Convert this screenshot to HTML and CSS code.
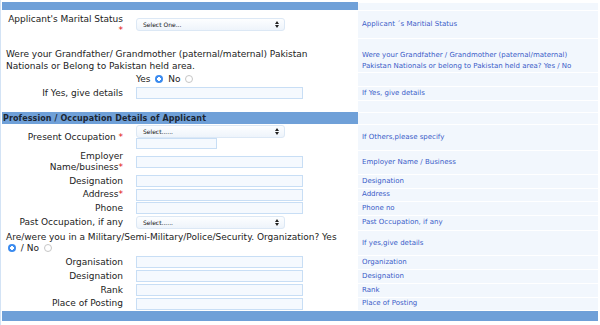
FILE: index.html
```html
<!DOCTYPE html>
<html lang="en">
<head>
    <meta charset="UTF-8">
    <meta name="viewport" content="width=device-width, initial-scale=1.0">
    <title>Applicant Details</title>
    <link rel="stylesheet" href="styles.css">
</head>
<body>
    <div class="page">
        <table class="form">
            <colgroup>
                <col class="col-label">
                <col class="col-field">
                <col class="col-help">
            </colgroup>
            <tr class="top">
                <td colspan="2" class="bar"></td>
                <td class="help"></td>
            </tr>
            <tr class="tall">
                <td class="label">Applicant's Marital Status<br><span class="req">*</span></td>
                <td class="field">
                    <div class="select wide"><span>Select One...</span><svg width="4" height="7" viewBox="0 0 4 7"><path d="M0 3L2 0L4 3Z M0 4L2 7L4 4Z" fill="#222"/></svg></div>
                </td>
                <td class="help">Applicant ´s Maritial Status</td>
            </tr>
            <tr class="question">
                <td colspan="2" class="text">Were your Grandfather/ Grandmother (paternal/maternal) Pakistan Nationals or Belong to Pakistan held area.</td>
                <td class="help">Were your Grandfather / Grandmother (paternal/maternal)<br>Pakistan Nationals or belong to Pakistan held area? Yes / No</td>
            </tr>
            <tr>
                <td></td>
                <td class="field">Yes <input type="radio" name="gp" checked> No <input type="radio" name="gp"></td>
                <td class="help"></td>
            </tr>
            <tr>
                <td class="label">If Yes, give details</td>
                <td class="field"><input type="text" class="box"></td>
                <td class="help">If Yes, give details</td>
            </tr>
            <tr class="spacer">
                <td colspan="2"></td>
                <td class="help"></td>
            </tr>
            <tr class="heading">
                <td colspan="2" class="bar section">Profession / Occupation Details of Applicant</td>
                <td class="help"></td>
            </tr>
            <tr class="occupation">
                <td class="label">Present Occupation <span class="req">*</span></td>
                <td class="field">
                    <div class="select wide"><span>Select......</span><svg width="4" height="7" viewBox="0 0 4 7"><path d="M0 3L2 0L4 3Z M0 4L2 7L4 4Z" fill="#222"/></svg></div>
                    <input type="text" class="box short">
                </td>
                <td class="help">If Others,please specify</td>
            </tr>
            <tr class="double">
                <td class="label">Employer<br>Name/business<span class="req">*</span></td>
                <td class="field"><input type="text" class="box"></td>
                <td class="help">Employer Name / Business</td>
            </tr>
            <tr>
                <td class="label">Designation</td>
                <td class="field"><input type="text" class="box"></td>
                <td class="help">Designation</td>
            </tr>
            <tr class="short-row">
                <td class="label">Address<span class="req">*</span></td>
                <td class="field"><input type="text" class="box"></td>
                <td class="help">Address</td>
            </tr>
            <tr>
                <td class="label">Phone</td>
                <td class="field"><input type="text" class="box"></td>
                <td class="help">Phone no</td>
            </tr>
            <tr class="past">
                <td class="label">Past Occupation, if any</td>
                <td class="field">
                    <div class="select wide"><span>Select......</span><svg width="4" height="7" viewBox="0 0 4 7"><path d="M0 3L2 0L4 3Z M0 4L2 7L4 4Z" fill="#222"/></svg></div>
                </td>
                <td class="help">Past Occupation, if any</td>
            </tr>
            <tr class="military">
                <td colspan="2" class="text">Are/were you in a Military/Semi-Military/Police/Security. Organization? Yes <input type="radio" name="mil" checked> / No <input type="radio" name="mil"></td>
                <td class="help">If yes,give details</td>
            </tr>
            <tr>
                <td class="label">Organisation</td>
                <td class="field"><input type="text" class="box"></td>
                <td class="help">Organization</td>
            </tr>
            <tr>
                <td class="label">Designation</td>
                <td class="field"><input type="text" class="box"></td>
                <td class="help">Designation</td>
            </tr>
            <tr>
                <td class="label">Rank</td>
                <td class="field"><input type="text" class="box"></td>
                <td class="help">Rank</td>
            </tr>
            <tr class="short-row">
                <td class="label">Place of Posting</td>
                <td class="field"><input type="text" class="box"></td>
                <td class="help">Place of Posting</td>
            </tr>
            <tr class="foot">
                <td colspan="3" class="bar"></td>
            </tr>
        </table>
    </div>
</body>
</html>
```
FILE: styles.css
```css
body {
    margin: 0;
    background: #fff;
    font-family: "DejaVu Sans", Verdana, sans-serif;
    color: #222;
}
.page {
    border-left: 1px solid #d3e3f5;
    padding: 2px 0 0 1px;
    height: 323px;
}
.form {
    width: 596px;
    border-collapse: collapse;
    table-layout: fixed;
    font-size: 9px;
    line-height: 11px;
}
.col-label {
    width: 128px;
}
.col-field {
    width: 228px;
}
.form td {
    height: 14px;
    padding: 0;
    vertical-align: middle;
}
.bar {
    background: #6fa0d8;
}
.top td {
    height: 8px;
}
.tall td {
    height: 27px;
}
.tall .label {
    padding-top: 1px;
}
.question td {
    height: 34px;
    padding-bottom: 0;
    vertical-align: bottom;
    line-height: 12px;
}
.question .help {
    line-height: 11px;
}
.spacer td {
    height: 12px;
}
.heading td {
    height: 12px;
}
.occupation td {
    height: 26px;
}
.double td {
    height: 24px;
}
.military td {
    height: 24px;
    padding-top: 1px;
}
.short-row td {
    height: 13px;
}
.past td {
    height: 15px;
}
.foot td {
    height: 11px;
    box-shadow: inset 0 1px #fff;
}
.section {
    font-weight: bold;
    font-size: 8px;
    letter-spacing: 0.1px;
    color: #1c2633;
    padding-left: 1px !important;
}
.label {
    text-align: right;
    padding-right: 7px !important;
}
.req {
    color: #e01010;
}
.field {
    padding-left: 6px !important;
}
.text {
    padding-left: 4px !important;
    padding-right: 14px !important;
}
.help {
    background: #f2f7fd;
    box-shadow: inset 0 1px #fff;
    color: #3a5cc8;
    font-size: 7px;
    padding-left: 4px !important;
}
.select {
    display: flex;
    justify-content: space-between;
    align-items: center;
    box-sizing: border-box;
    height: 13px;
    padding: 0 5px 0 6px;
    border: 1px solid #dce8f5;
    border-radius: 3px;
    background: linear-gradient(#fdfeff, #eef4fb);
    font-size: 6px;
    color: #111;
}
.wide {
    width: 149px;
}
.box {
    display: block;
    box-sizing: border-box;
    width: 167px;
    height: 12px;
    margin: 0;
    padding: 0;
    border: 1px solid #c8def5;
    background: #f5f9fe;
}
.box.short {
    width: 81px;
    height: 11px;
}
input[type="radio"] {
    appearance: none;
    width: 8px;
    height: 8px;
    margin: 0 2px;
    border-radius: 50%;
    border: 1px solid #c6c6c6;
    background: #fff;
    vertical-align: -1px;
    box-sizing: border-box;
}
input[type="radio"]:checked {
    border: none;
    background: radial-gradient(circle, #fff 0 1.6px, #3b8bef 2px);
}
```
